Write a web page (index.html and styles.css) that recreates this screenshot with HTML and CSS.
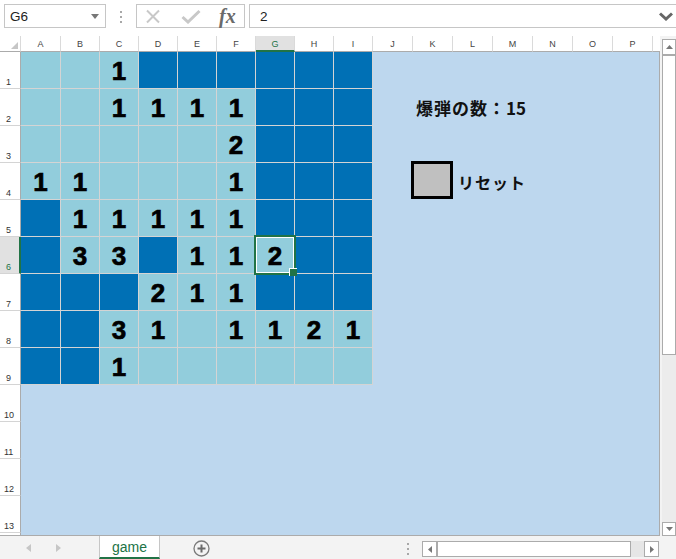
FILE: index.html
```html
<!DOCTYPE html>
<html lang="ja">
<head>
<meta charset="utf-8">
<title>game</title>
<link rel="stylesheet" href="styles.css">
</head>
<body>
<div class="app">
  <div class="toolbar">
    <div class="namebox"><span>G6</span><svg class="nb-arrow" width="8" height="5" viewBox="0 0 8 5"><path d="M0 0h8L4 5z" fill="#777"/></svg></div>
    <div class="vdots"><i></i><i></i><i></i></div>
    <div class="fbtns">
      <svg class="ic-x" width="14" height="15" viewBox="0 0 14 15"><path d="M1 1.5L13 13.5M13 1.5L1 13.5" stroke="#c8c8c8" stroke-width="2" fill="none"/></svg>
      <svg class="ic-ok" width="20" height="15" viewBox="0 0 20 15"><path d="M1.5 8L7 13L18.5 2" stroke="#c8c8c8" stroke-width="3" fill="none"/></svg>
      <span class="fx">fx</span>
    </div>
    <div class="formula"><span>2</span><svg class="chev" width="14" height="9" viewBox="0 0 14 9"><path d="M1 1.5L7 7L13 1.5" stroke="#666" stroke-width="3" fill="none"/></svg></div>
  </div>

  <div class="main">
    <div class="sheet">
      <div class="colheads">
        <div class="corner"><svg width="7" height="7" viewBox="0 0 7 7"><path d="M7 0V7H0z" fill="#c6c6c6"/></svg></div>
        <div class="ch w40">A</div>
        <div class="ch">B</div>
        <div class="ch">C</div>
        <div class="ch">D</div>
        <div class="ch">E</div>
        <div class="ch">F</div>
        <div class="ch sel">G</div>
        <div class="ch">H</div>
        <div class="ch">I</div>
        <div class="ch w40">J</div>
        <div class="ch w40">K</div>
        <div class="ch w40">L</div>
        <div class="ch w40">M</div>
        <div class="ch w40">N</div>
        <div class="ch w40">O</div>
        <div class="ch w40">P</div>
        <div class="ch rest"></div>
      </div>
      <div class="body">
        <div class="rowheads">
          <div class="rh">1</div>
          <div class="rh">2</div>
          <div class="rh">3</div>
          <div class="rh">4</div>
          <div class="rh">5</div>
          <div class="rh sel">6</div>
          <div class="rh">7</div>
          <div class="rh">8</div>
          <div class="rh">9</div>
          <div class="rh">10</div>
          <div class="rh">11</div>
          <div class="rh">12</div>
          <div class="rh">13</div>
          <div class="rh rest"></div>
        </div>
        <div class="canvas">
          <div class="board">
            <div class="c l"></div><div class="c l"></div><div class="c l">1</div><div class="c d"></div><div class="c d"></div><div class="c d"></div><div class="c d"></div><div class="c d"></div><div class="c d"></div>
            <div class="c l"></div><div class="c l"></div><div class="c l">1</div><div class="c l">1</div><div class="c l">1</div><div class="c l">1</div><div class="c d"></div><div class="c d"></div><div class="c d"></div>
            <div class="c l"></div><div class="c l"></div><div class="c l"></div><div class="c l"></div><div class="c l"></div><div class="c l">2</div><div class="c d"></div><div class="c d"></div><div class="c d"></div>
            <div class="c l">1</div><div class="c l">1</div><div class="c l"></div><div class="c l"></div><div class="c l"></div><div class="c l">1</div><div class="c d"></div><div class="c d"></div><div class="c d"></div>
            <div class="c d"></div><div class="c l">1</div><div class="c l">1</div><div class="c l">1</div><div class="c l">1</div><div class="c l">1</div><div class="c d"></div><div class="c d"></div><div class="c d"></div>
            <div class="c d"></div><div class="c l">3</div><div class="c l">3</div><div class="c d"></div><div class="c l">1</div><div class="c l">1</div><div class="c l active">2</div><div class="c d"></div><div class="c d"></div>
            <div class="c d"></div><div class="c d"></div><div class="c d"></div><div class="c l">2</div><div class="c l">1</div><div class="c l">1</div><div class="c d"></div><div class="c d"></div><div class="c d"></div>
            <div class="c d"></div><div class="c d"></div><div class="c l">3</div><div class="c l">1</div><div class="c l"></div><div class="c l">1</div><div class="c l">1</div><div class="c l">2</div><div class="c l">1</div>
            <div class="c d"></div><div class="c d"></div><div class="c l">1</div><div class="c l"></div><div class="c l"></div><div class="c l"></div><div class="c l"></div><div class="c l"></div><div class="c l"></div>
          </div>
          <div class="panel">
            <div class="count"><span>爆弾の数</span><span class="colon">：</span><span class="num">15</span></div>
            <div class="reset"><div class="btnbox"></div><span class="reset-label">リセット</span></div>
          </div>
        </div>
      </div>
    </div>
    <div class="vscroll">
      <div class="sbtn up"><svg width="7" height="4" viewBox="0 0 7 4"><path d="M0 4L3.5 0L7 4z" fill="#777"/></svg></div>
      <div class="vthumb"></div>
      <div class="vtrack"></div>
      <div class="sbtn down"><svg width="7" height="4" viewBox="0 0 7 4"><path d="M0 0L3.5 4L7 0z" fill="#777"/></svg></div>
    </div>
  </div>

  <div class="tabbar">
    <div class="tabnav">
      <svg class="nav-l" width="5" height="8" viewBox="0 0 5 8"><path d="M5 0V8L0 4z" fill="#c6c6c6"/></svg>
      <svg class="nav-r" width="5" height="8" viewBox="0 0 5 8"><path d="M0 0V8L5 4z" fill="#c6c6c6"/></svg>
    </div>
    <div class="tab">game</div>
    <svg class="addsheet" width="17" height="17" viewBox="0 0 17 17"><circle cx="8.5" cy="8.5" r="7.5" fill="none" stroke="#7a7a7a" stroke-width="1.3"/><path d="M8.5 4.5V12.5M4.5 8.5H12.5" stroke="#6a6a6a" stroke-width="2"/></svg>
    <div class="hdots"><i></i><i></i><i></i></div>
    <div class="hscroll">
      <div class="hbtn"><svg width="4" height="7" viewBox="0 0 4 7"><path d="M4 0V7L0 3.5z" fill="#777"/></svg></div>
      <div class="hthumb"></div>
      <div class="htrack"></div>
      <div class="hbtn"><svg width="4" height="7" viewBox="0 0 4 7"><path d="M0 0V7L4 3.5z" fill="#777"/></svg></div>
    </div>
  </div>
</div>
</body>
</html>
```
FILE: styles.css
```css
* { box-sizing: border-box; }
body {
  margin: 0;
  background: #fff;
  font-family: "Liberation Sans", Arial, sans-serif;
}
.app {
  width: 676px;
  height: 559px;
  overflow: hidden;
  display: flex;
  flex-direction: column;
}

/* ---------- formula bar ---------- */
.toolbar {
  height: 36px;
  flex: none;
  display: flex;
  align-items: flex-start;
  padding: 4px 0 0 4px;
}
.namebox {
  width: 102px;
  height: 24px;
  flex: none;
  border: 1px solid #c6c6c6;
  display: flex;
  align-items: center;
  justify-content: space-between;
  padding: 0 6px 0 5px;
  font-size: 13.5px;
  color: #222;
}
.vdots {
  width: 30px;
  flex: none;
  display: flex;
  flex-direction: column;
  align-items: center;
  gap: 3px;
  padding-top: 7px;
}
.vdots i, .hdots i {
  display: block;
  width: 2px;
  height: 2px;
  background: #a8a8a8;
}
.fbtns {
  width: 109px;
  height: 24px;
  flex: none;
  border: 1px solid #c6c6c6;
  display: flex;
  align-items: center;
  padding-left: 9px;
}
.ic-x { margin-top: 0; }
.ic-ok { margin-left: 21px; }
.fx {
  margin-left: 18px;
  font-family: "Liberation Serif", "Times New Roman", serif;
  font-style: italic;
  font-weight: bold;
  font-size: 20px;
  color: #6a6a6a;
  line-height: 22px;
}
.formula {
  flex: 1;
  margin-left: 4px;
  height: 24px;
  border: 1px solid #c6c6c6;
  border-right: none;
  display: flex;
  align-items: center;
  justify-content: space-between;
  padding: 0 3px 0 10px;
  font-size: 13.5px;
  color: #222;
}

/* ---------- sheet ---------- */
.main {
  height: 500px;
  flex: none;
  display: flex;
}
.sheet {
  width: 660px;
  flex: none;
  display: flex;
  flex-direction: column;
}
.colheads {
  height: 16px;
  flex: none;
  display: flex;
}
.corner {
  width: 21px;
  flex: none;
  border-bottom: 1px solid #ababab;
  border-right: 1px solid #dadada;
  display: flex;
  align-items: flex-end;
  justify-content: flex-end;
  padding: 0 2px 2px 0;
}
.ch {
  width: 39px;
  flex: none;
  border-bottom: 1px solid #ababab;
  border-right: 1px solid #dadada;
  font-size: 9px;
  color: #444;
  text-align: center;
  line-height: 14px;
  padding-top: 1px;
}
.ch.w40 { width: 40px; }
.ch.rest { flex: 1; border-right: none; }
.ch.sel {
  background: #e1e1e1;
  color: #217346;
  border-bottom: 2px solid #217346;
}

.body {
  flex: 1;
  display: flex;
  border-bottom: 1px solid #ababab;
  min-height: 0;
}
.rowheads {
  width: 21px;
  flex: none;
  display: flex;
  flex-direction: column;
}
.rh {
  height: 37px;
  flex: none;
  border-bottom: 1px solid #d4d4d4;
  border-right: 1px solid #ababab;
  font-size: 9px;
  color: #333;
  display: flex;
  align-items: flex-end;
  padding: 0 0 1px 6px;
  line-height: 10px;
}
.rh:nth-child(n+10) { padding-left: 4px; }
.rh.rest { flex: 1; height: auto; border-bottom: none; }
.rh.sel {
  background: #e1e1e1;
  color: #217346;
  border-right: 2px solid #217346;
}

.canvas {
  flex: 1;
  background: #bdd7ee;
  border-right: 1px solid #ababab;
  display: flex;
  align-items: flex-start;
}
.board {
  display: grid;
  grid-template-columns: 40px repeat(8, 39px);
  grid-auto-rows: 37px;
  flex: none;
}
.c {
  border-right: 1px solid #d4d4d4;
  border-bottom: 1px solid #d4d4d4;
  display: flex;
  align-items: center;
  justify-content: center;
  font-size: 26px;
  font-weight: bold;
  color: #000;
  -webkit-text-stroke: 0.7px #000;
  line-height: 1;
  padding-top: 1px;
}
.c.l { background: #92cddc; }
.c.d { background: #0070b5; }
.c.active { position: relative; z-index: 2; }
.c.active::after {
  content: "";
  position: absolute;
  left: -2px;
  top: -2px;
  right: -2px;
  bottom: -2px;
  border: 2px solid #217346;
  box-shadow: inset 0 0 0 1px #fff;
}
.c.active::before {
  content: "";
  position: absolute;
  right: -3px;
  bottom: -3px;
  width: 7px;
  height: 7px;
  background: #217346;
  border-left: 1px solid #fff;
  border-top: 1px solid #fff;
  z-index: 3;
}

.panel {
  display: flex;
  flex-direction: column;
  align-items: flex-start;
  padding: 46px 0 0 38px;
  font-family: "Noto Sans CJK JP", "Noto Sans", sans-serif;
  font-weight: bold;
  color: #111;
}
.count {
  margin-left: 5px;
  font-size: 17px;
  letter-spacing: 1px;
  line-height: 20px;
  height: 20px;
  white-space: nowrap;
}
.count .num { letter-spacing: 0; }
.reset {
  margin-top: 43px;
  display: flex;
  align-items: center;
}
.btnbox {
  width: 42px;
  height: 38px;
  background: #c0c0c0;
  border: 3px solid #000;
}
.reset-label {
  margin-left: 5px;
  font-size: 16px;
  letter-spacing: 1px;
  line-height: 20px;
  padding-top: 3px;
}

/* ---------- vertical scrollbar ---------- */
.vscroll {
  flex: 1;
  background: #f3f3f3;
  display: flex;
  flex-direction: column;
  padding: 3px 0 0 2px;
}
.sbtn {
  height: 16px;
  flex: none;
  background: #fff;
  border: 1px solid #ababab;
  display: flex;
  align-items: center;
  justify-content: center;
}
.sbtn.down { height: 14px; }
.vthumb {
  height: 301px;
  flex: none;
  background: #fff;
  border: 1px solid #ababab;
  border-top: 2px solid #ababab;
  margin-top: -1px;
}
.vtrack { flex: 1; background: #ececec; }

/* ---------- sheet tabs ---------- */
.tabbar {
  flex: 1;
  background: #f3f3f3;
  display: flex;
  align-items: stretch;
}
.tabnav {
  width: 99px;
  flex: none;
  display: flex;
  align-items: center;
  padding-left: 26px;
  padding-top: 1px;
}
.nav-r { margin-left: 25px; }
.tab {
  width: 61px;
  flex: none;
  background: #fff;
  border-left: 1px solid #c6c6c6;
  border-right: 1px solid #c6c6c6;
  border-bottom: 2px solid #217346;
  color: #217346;
  font-size: 14px;
  text-align: center;
  line-height: 20px;
  padding-top: 1px;
}
.addsheet {
  margin: 4px 0 0 33px;
  flex: none;
}
.hdots {
  margin-left: 197px;
  flex: none;
  display: flex;
  flex-direction: column;
  gap: 3px;
  padding-top: 7px;
}
.hscroll {
  margin: 5px 0 0 13px;
  height: 16px;
  width: 237px;
  flex: none;
  display: flex;
}
.hbtn {
  width: 15px;
  flex: none;
  background: #fff;
  border: 1px solid #ababab;
  display: flex;
  align-items: center;
  justify-content: center;
}
.hthumb {
  width: 195px;
  flex: none;
  background: #fff;
  border: 1px solid #ababab;
  border-left: 2px solid #ababab;
  margin-left: -1px;
}
.htrack { flex: 1; background: #e6e6e6; }
```
